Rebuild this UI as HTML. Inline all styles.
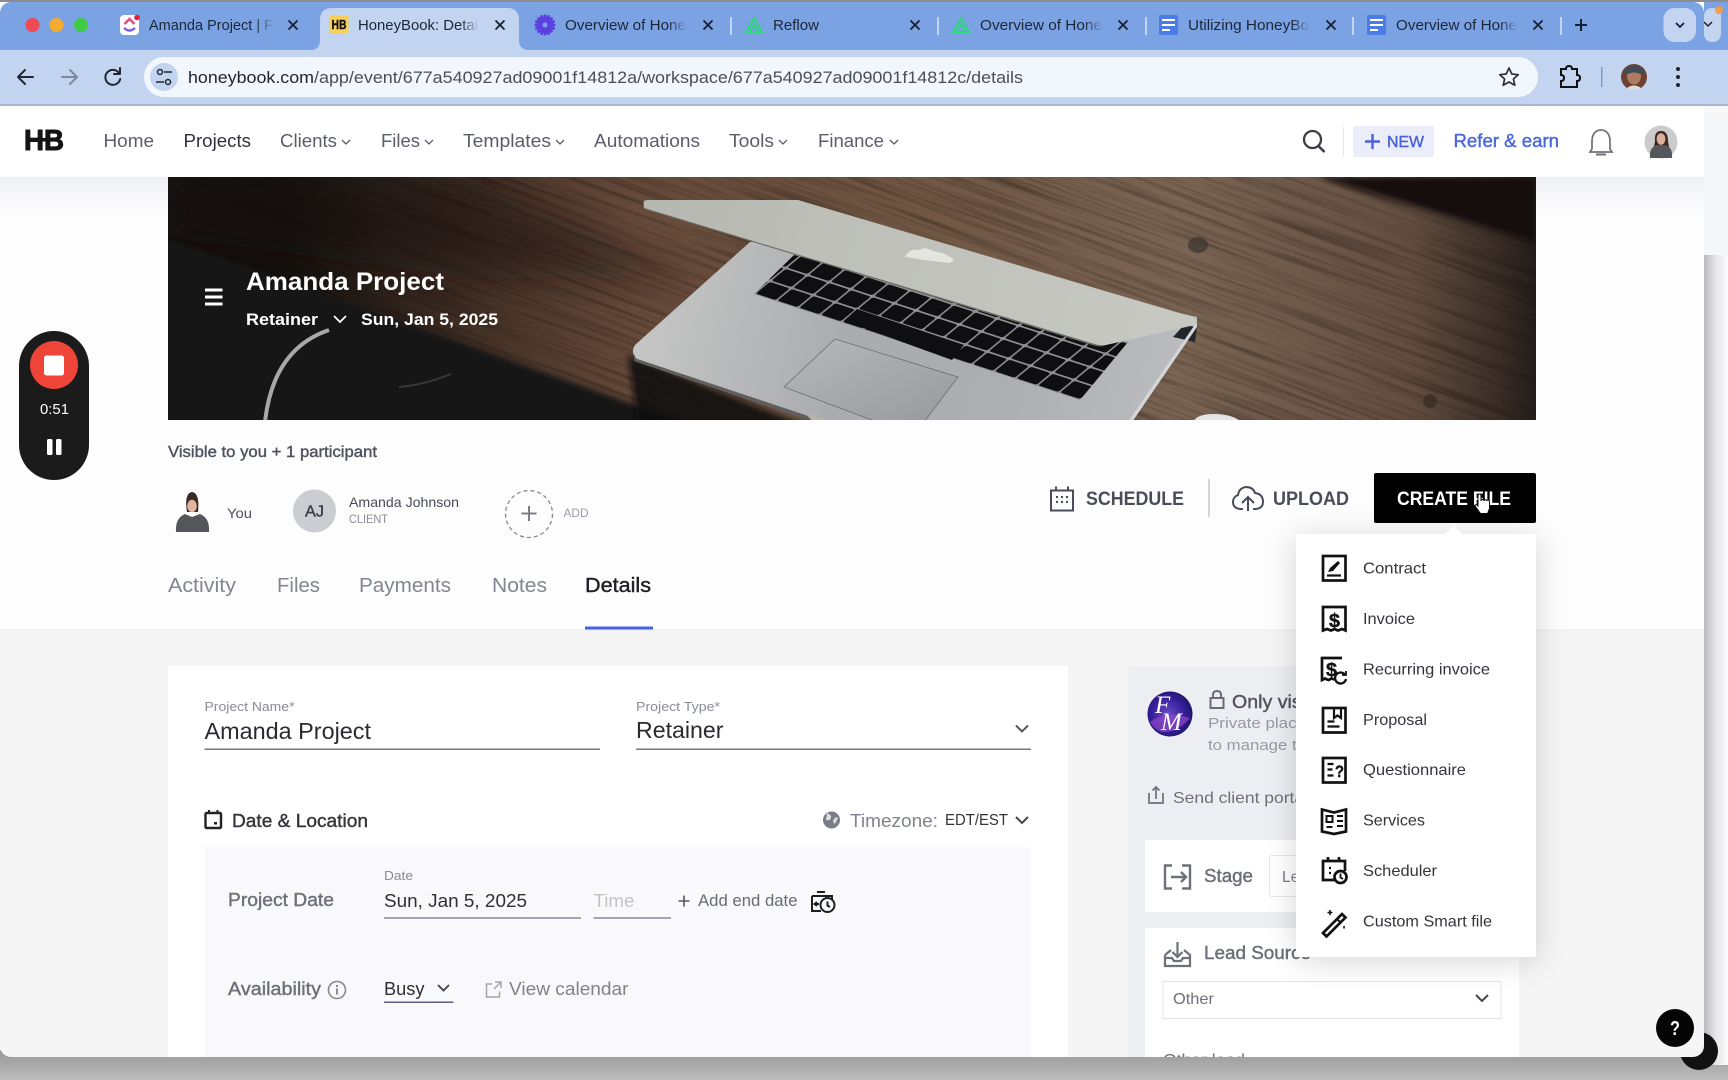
<!DOCTYPE html>
<html lang="en"><head><meta charset="utf-8"><title>HoneyBook: Details</title>
<style>
html,body{margin:0;padding:0;background:#fff;width:1728px;height:1080px;overflow:hidden}
svg{display:block}
text{font-family:"Liberation Sans",Arial,sans-serif}
.b{font-weight:700}
.m{stroke-width:.4px}
</style></head><body>
<svg xmlns="http://www.w3.org/2000/svg" width="1728" height="1080" viewBox="0 0 1728 1080">
<defs>
<clipPath id="win"><rect x="0" y="2" width="1704" height="1055" rx="11"/></clipPath>
<clipPath id="hero"><rect x="0" y="0" width="1368" height="243"/></clipPath>
<linearGradient id="bot" x1="0" y1="0" x2="0" y2="1"><stop offset="0" stop-color="#979797"/><stop offset="1" stop-color="#bdbdbd"/></linearGradient>
<linearGradient id="rs" x1="0" y1="0" x2="1" y2="0"><stop offset="0" stop-color="#b9babd"/><stop offset=".5" stop-color="#e6e6e8"/><stop offset="1" stop-color="#fdfdfd"/></linearGradient>
<linearGradient id="wd" gradientUnits="userSpaceOnUse" x1="120" y1="0" x2="1368" y2="0">
<stop offset="0" stop-color="#15110f"/><stop offset=".12" stop-color="#3a2a21"/><stop offset=".28" stop-color="#664a3a"/><stop offset=".5" stop-color="#705643"/><stop offset=".72" stop-color="#7a6453"/><stop offset=".9" stop-color="#624e40"/><stop offset=".97" stop-color="#3a2e27"/><stop offset="1" stop-color="#241d19"/></linearGradient>
<linearGradient id="lid" gradientUnits="userSpaceOnUse" x1="475" y1="25" x2="1029" y2="150"><stop offset="0" stop-color="#b6b7b1"/><stop offset=".35" stop-color="#bebfb9"/><stop offset="1" stop-color="#c8c9c3"/></linearGradient>
<linearGradient id="base" gradientUnits="userSpaceOnUse" x1="470" y1="120" x2="1000" y2="240"><stop offset="0" stop-color="#c6c7c5"/><stop offset=".4" stop-color="#aaabaf"/><stop offset=".7" stop-color="#adaeb2"/><stop offset="1" stop-color="#bbbcc0"/></linearGradient>
<linearGradient id="pad" x1="0" y1="0" x2="1" y2="1"><stop offset="0" stop-color="#b7b8bb"/><stop offset="1" stop-color="#98999d"/></linearGradient>
<filter id="wood" x="0" y="0" width="100%" height="100%" color-interpolation-filters="sRGB"><feTurbulence type="fractalNoise" baseFrequency="0.006 0.22" numOctaves="4" seed="7"/><feColorMatrix values="0 0 0 0 .08  0 0 0 0 .05  0 0 0 0 .03  2.2 0 0 0 -0.95"/></filter>
<filter id="bl" x="-20%" y="-20%" width="140%" height="140%"><feGaussianBlur stdDeviation="3"/></filter>
<filter id="bl2" x="-30%" y="-30%" width="160%" height="160%"><feGaussianBlur stdDeviation="16"/></filter>
<pattern id="grain" patternUnits="userSpaceOnUse" width="1800" height="800" patternTransform="translate(-100 -600) rotate(20)"><rect width="1800" height="800" fill="#000" filter="url(#wood)"/></pattern>
<pattern id="keys" patternUnits="userSpaceOnUse" width="20" height="20" patternTransform="matrix(1.087 .353 -.79 .65 586 117)"><rect width="20" height="20" fill="#8f9094"/><rect x=".8" y="1" width="18.400" height="18" rx="2" fill="#0f0f11"/></pattern>
<radialGradient id="fm" cx=".45" cy=".5" r=".6"><stop offset="0" stop-color="#6a4ac8"/><stop offset=".6" stop-color="#35209a"/><stop offset="1" stop-color="#1b1260"/></radialGradient>
<linearGradient id="f1" x1="0" y1="0" x2="1" y2="0"><stop offset="0" stop-color="#7ba2e3" stop-opacity="0"/><stop offset="1" stop-color="#7ba2e3"/></linearGradient>
<linearGradient id="f2" x1="0" y1="0" x2="1" y2="0"><stop offset="0" stop-color="#c3d4f1" stop-opacity="0"/><stop offset="1" stop-color="#c3d4f1"/></linearGradient>
<linearGradient id="hs" x1="0" y1="0" x2="0" y2="1"><stop offset="0" stop-color="#eff0f4"/><stop offset="1" stop-color="#fdfdfe"/></linearGradient>
</defs>

<!-- backdrop -->
<rect width="1728" height="1080" fill="#fdfdfd"/>
<rect x="0" y="1050" width="1728" height="30" fill="url(#bot)"/>
<rect x="1704" y="255" width="24" height="810" fill="url(#rs)"/>
<rect x="1704" y="106" width="24" height="149" fill="#f6f7f9"/>
<rect x="1704" y="104" width="24" height="2" fill="#a8b6d0"/>
<rect x="1704" y="50" width="24" height="54" fill="#c3d4f1"/>
<rect x="1704" y="2" width="24" height="48" fill="#7ba2e3"/>
<rect x="1704" y="8" width="17" height="34" rx="8" fill="#c3d4f1"/>
<path d="M1704 22l4 4 4-4" fill="none" stroke="#222" stroke-width="1.5"/>
<circle cx="1719" cy="10" r="4" fill="#ef9d4d"/>
<circle cx="1699" cy="1051" r="19" fill="#111"/>
<rect x="0" y="0" width="1728" height="2" fill="#8c8c8c"/>

<g clip-path="url(#win)">
<rect x="0" y="2" width="1704" height="48" fill="#7ba2e3"/>
<rect x="0" y="50" width="1704" height="54" rx="0" fill="#c3d4f1"/>
<rect x="0" y="104" width="1704" height="2" fill="#a8b6d0"/>
<rect x="0" y="106" width="1704" height="524" fill="#fdfdfe"/>
<rect x="0" y="630" width="1704" height="430" fill="#f5f5f5"/>

<!-- traffic lights -->
<circle cx="32.5" cy="25" r="7" fill="#ee4a54"/><circle cx="56.5" cy="25" r="7" fill="#f5ab2e"/><circle cx="81" cy="25" r="7" fill="#3fcb45"/>

<!-- active tab -->
<path d="M310 50q10 0 10-10V20q0-12 12-12h175q12 0 12 12v20q0 10 10 10z" fill="#c3d4f1"/>

<!-- separators -->
<g fill="#c3d4f1"><rect x="730" y="17" width="2" height="18"/><rect x="937" y="17" width="2" height="18"/><rect x="1145" y="17" width="2" height="18"/><rect x="1352" y="17" width="2" height="18"/><rect x="1560" y="17" width="2" height="18"/></g>

<!-- tab icons -->
<rect x="120" y="15" width="19" height="20" rx="4" fill="#fff"/>
<path d="M124.500 24l5-5 5 5" fill="none" stroke="#e8487f" stroke-width="2.400"/>
<path d="M124 28q5.500 5 11 0" fill="none" stroke="#7a5cf0" stroke-width="2.400"/>
<circle cx="137" cy="17.500" r="2.800" fill="#e5213a"/>
<rect x="329.500" y="15" width="19" height="19" rx="2" fill="#f7cf5a"/>
<text x="331.500" y="29" font-size="13" class="b" fill="#111" stroke="#111" stroke-width=".4" textLength="15" lengthAdjust="spacingAndGlyphs">HB</text>
<g stroke="#5b3fe0" stroke-width="3" stroke-linecap="round"><path d="M545 16v18M536 25h18M538.600 18.600l12.800 12.800M538.600 31.400l12.800-12.800M541.500 16.500l7 17M548.500 16.500l-7 17M536.500 21.500l17 7M536.500 28.500l17-7"/></g>
<circle cx="545" cy="25" r="2.500" fill="#7ba2e3"/>
<g fill="none" stroke="#1fe06a" stroke-width="1.700"><path d="M754 18l-8 14h16z"/><path d="M754 24l-4.500 8M754 24l4.500 8"/><path d="M961 18l-8 14h16z"/><path d="M961 24l-4.500 8M961 24l4.500 8"/></g>
<rect x="1159" y="15" width="19" height="20" rx="2" fill="#4a7be6"/><g fill="#fff"><rect x="1162" y="19" width="13" height="2"/><rect x="1162" y="24" width="13" height="2"/><rect x="1162" y="29" width="8" height="2"/></g>
<rect x="1367" y="15" width="19" height="20" rx="2" fill="#4a7be6"/><g fill="#fff"><rect x="1370" y="19" width="13" height="2"/><rect x="1370" y="24" width="13" height="2"/><rect x="1370" y="29" width="8" height="2"/></g>

<!-- tab titles -->
<g fill="#1d2738" font-size="14.500">
<text x="149" y="30" textLength="124" lengthAdjust="spacingAndGlyphs">Amanda Project | F</text>
<text x="358" y="30" textLength="120" lengthAdjust="spacingAndGlyphs">HoneyBook: Detai</text>
<text x="565" y="30" textLength="121" lengthAdjust="spacingAndGlyphs">Overview of Hone</text>
<text x="773" y="30" textLength="46" lengthAdjust="spacingAndGlyphs">Reflow</text>
<text x="980" y="30" textLength="122" lengthAdjust="spacingAndGlyphs">Overview of Hone</text>
<text x="1188" y="30" textLength="121" lengthAdjust="spacingAndGlyphs">Utilizing HoneyBo</text>
<text x="1396" y="30" textLength="121" lengthAdjust="spacingAndGlyphs">Overview of Hone</text>
</g>
<rect x="255" y="14" width="19" height="22" fill="url(#f1)"/>
<rect x="460" y="14" width="19" height="22" fill="url(#f2)"/>
<rect x="668" y="14" width="19" height="22" fill="url(#f1)"/>
<rect x="1084" y="14" width="19" height="22" fill="url(#f1)"/>
<rect x="1291" y="14" width="19" height="22" fill="url(#f1)"/>
<rect x="1499" y="14" width="19" height="22" fill="url(#f1)"/>
<!-- tab close -->
<g fill="none" stroke="#16202e" stroke-width="1.800"><path d="M288.500 20.500l9 9m0-9l-9 9"/><path d="M495.500 20.500l9 9m0-9l-9 9"/><path d="M703.500 20.500l9 9m0-9l-9 9"/><path d="M910.500 20.500l9 9m0-9l-9 9"/><path d="M1118.500 20.500l9 9m0-9l-9 9"/><path d="M1326.500 20.500l9 9m0-9l-9 9"/><path d="M1533.500 20.500l9 9m0-9l-9 9"/><path d="M1581 19v12m-6-6h12" stroke-width="2"/></g>
<rect x="1663.500" y="8" width="32.500" height="34" rx="11" fill="#c3d4f1"/>
<path d="M1676 23l4 4 4-4" fill="none" stroke="#16202e" stroke-width="1.800"/>

<!-- toolbar -->
<g fill="none" stroke-linecap="round" stroke-linejoin="round">
<path d="M33 77H19m6-7l-7 7 7 7" stroke="#1f2733" stroke-width="2"/>
<path d="M62 77h14m-6-7l7 7-7 7" stroke="#7e8a9c" stroke-width="2"/>
<path d="M119 73a7.500 7.500 0 1 0 1.200 6M120 68v6h-6" stroke="#1f2733" stroke-width="2"/>
</g>
<rect x="144" y="57" width="1394" height="40" rx="20" fill="#f2f6fd"/>
<circle cx="164" cy="77" r="14" fill="#c3d4f1"/>
<g fill="none" stroke="#1f2733" stroke-width="1.500"><circle cx="160" cy="72" r="2.500"/><path d="M164 72h8M156 82h8"/><circle cx="168" cy="82" r="2.500"/></g>
<text x="188" y="83" font-size="16.500" fill="#1d2430" textLength="126" lengthAdjust="spacingAndGlyphs">honeybook.com</text>
<text x="314" y="83" font-size="16.500" fill="#4a5059" textLength="709" lengthAdjust="spacingAndGlyphs">/app/event/677a540927ad09001f14812a/workspace/677a540927ad09001f14812c/details</text>
<path d="M1509 68l2.800 6 6.400.700-4.800 4.300 1.400 6.300-5.800-3.300-5.800 3.300 1.400-6.300-4.800-4.300 6.400-.700z" fill="none" stroke="#2a303a" stroke-width="1.700" stroke-linejoin="round"/>
<path d="M1561 69h5q0-3 3-3t3 3h5v6q3 0 3 3t-3 3v6h-16v-6q3 0 3-3t-3-3z" fill="none" stroke="#111" stroke-width="2"/>
<rect x="1601" y="67" width="1.500" height="20" fill="#7d9ad0"/>
<circle cx="1634" cy="77" r="13" fill="#6e4030"/><ellipse cx="1634" cy="76" rx="7" ry="8.500" fill="#b07a60"/><path d="M1623 72q11-13 22 0l-3 3q-8-5-16 0z" fill="#3f4c58"/><path d="M1627 88q7-5 14 0l-3 2h-8z" fill="#ddd"/>
<g fill="#1d2430"><circle cx="1678" cy="69" r="2"/><circle cx="1678" cy="77" r="2"/><circle cx="1678" cy="85" r="2"/></g>

<!-- app header -->
<rect x="0" y="106" width="1704" height="71" fill="#fff"/>
<rect x="0" y="177" width="168" height="36" fill="url(#hs)"/>
<rect x="1536" y="177" width="168" height="36" fill="url(#hs)"/>
<text x="24" y="150" font-size="29" class="b" fill="#151515" stroke="#151515" stroke-width="1" textLength="40" lengthAdjust="spacingAndGlyphs">HB</text>
<rect x="36" y="138" width="10" height="3.500" fill="#151515"/>
<g font-size="18" fill="#5b5e68">
<text x="103.500" y="147" textLength="50.500" lengthAdjust="spacingAndGlyphs">Home</text>
<text x="183.500" y="147" fill="#30323a" textLength="67.500" lengthAdjust="spacingAndGlyphs">Projects</text>
<text x="280" y="147" textLength="57" lengthAdjust="spacingAndGlyphs">Clients</text>
<text x="381" y="147" textLength="39" lengthAdjust="spacingAndGlyphs">Files</text>
<text x="463" y="147" textLength="88" lengthAdjust="spacingAndGlyphs">Templates</text>
<text x="594" y="147" textLength="106" lengthAdjust="spacingAndGlyphs">Automations</text>
<text x="729" y="147" textLength="45" lengthAdjust="spacingAndGlyphs">Tools</text>
<text x="818" y="147" textLength="66" lengthAdjust="spacingAndGlyphs">Finance</text>
</g>
<g fill="none" stroke="#5b5e68" stroke-width="1.300"><path d="M342 140l4 4 4-4M425 140l4 4 4-4M556 140l4 4 4-4M779 140l4 4 4-4M890 140l4 4 4-4"/></g>
<circle cx="1312.500" cy="139.500" r="8.500" fill="none" stroke="#3c3e46" stroke-width="2.300"/><path d="M1318.500 146l6 6" stroke="#3c3e46" stroke-width="2.600"/>
<rect x="1343" y="127" width="1" height="29" fill="#e6e7ec"/>
<rect x="1353" y="126" width="81" height="31" rx="2" fill="#ecedfb"/>
<path d="M1372.500 134v15m-7.500-7.500h15" stroke="#4a62d8" stroke-width="2.400"/>
<text x="1387" y="147" font-size="16" class="m" stroke="#4a62d8" fill="#4a62d8" textLength="37" lengthAdjust="spacingAndGlyphs">NEW</text>
<text x="1453.500" y="147" font-size="18" class="m" stroke="#4a66dc" fill="#4a66dc" textLength="105.500" lengthAdjust="spacingAndGlyphs">Refer &amp; earn</text>
<path d="M1601 130c-6 0-9 5-9 11v8l-2 3h22l-2-3v-8c0-6-3-11-9-11z" fill="none" stroke="#6f7179" stroke-width="1.700"/><rect x="1596" y="153.500" width="10" height="2" fill="#6f7179"/>
<circle cx="1661" cy="142" r="16.500" fill="#cbcbcb"/>
<path d="M1655 141q-1-10 6-10t7 10l1 6h-15z" fill="#3b2a22"/><ellipse cx="1661" cy="139" rx="4.400" ry="5.800" fill="#dcb09a"/><path d="M1650 158q-1-11 7-13h8q8 2 7 13z" fill="#55565c"/>

<!-- hero -->
<g transform="translate(168 177)">
<g clip-path="url(#hero)">
<rect width="1368" height="243" fill="url(#wd)"/>
<rect width="1368" height="243" fill="url(#grain)" opacity=".38"/>
<path d="M0 0H300L520 100 300 100 0 60z" fill="#120e0c" opacity=".45" filter="url(#bl2)"/>
<path d="M1152 0h216v66z" fill="#131110" filter="url(#bl)"/>
<path d="M-10 58L530 250H-10z" fill="#141313" filter="url(#bl)"/>
<path d="M97 245Q105 172 161 153" fill="none" stroke="#a8a8a8" stroke-width="4"/>
<path d="M231 210q25-2 52-13" fill="none" stroke="#383838" stroke-width="2"/>
<ellipse cx="1030" cy="68" rx="10" ry="8" fill="#3b342f" opacity=".7"/>
<ellipse cx="1262" cy="224" rx="7" ry="7" fill="#332720" opacity=".6"/>
<path d="M1025 245q4-8 20-8 20 0 28 8z" fill="#e4e4e2"/>
<!-- laptop -->
<path d="M460 178L640 250H470z" fill="#0c0c0c" filter="url(#bl)" opacity=".85"/>
<path d="M582 65L467 168q-5 8 2 14L637 238l20 7H964L1029 150 1029 140 700 65z" fill="url(#base)"/>
<path d="M466 176q1 5 3 6L637 238l28 9-2 4L466 184z" fill="#5f5f60"/>
<path d="M637 236l28 9h-20z" fill="#b4b4a8"/>
<path d="M626 78L586 117 912 223 960 165z" fill="url(#keys)"/>
<path d="M676 144L689 132 796 168 784 183z" fill="#0f0f11"/>
<path d="M667 162L790 200 756 245H709L616 210z" fill="url(#pad)" stroke="#6d6e72" stroke-width=".8"/>
<path d="M1029 150L1016 148 1005 160 1027 165z" fill="#23272c"/>
<path d="M964 245L1029 150l-1-4-68 99z" fill="#d5d6d8"/>
<path d="M475.500 26q0-3 4-3H630L1025 140q6 3 2 8L938 168q-6 1-12-1L476 31z" fill="url(#lid)"/>
<path d="M476 31L926 167q6 2 12 1l-2 1q-6 1-12-1L476 32z" fill="#6e6e68"/>
<path d="M737 80q4-9 14-7 6-4 14 1 14 2 21 9l-4 3q-20-2-45-6z" fill="#e4e4e0"/>
</g>
<!-- hero overlays -->
<g fill="#fff">
<rect x="37" y="111.500" width="17.500" height="3"/><rect x="37" y="118.500" width="17.500" height="3"/><rect x="37" y="125.500" width="17.500" height="3"/>
<text x="78" y="113" font-size="25" class="b" textLength="198" lengthAdjust="spacingAndGlyphs">Amanda Project</text>
<text x="78" y="148" font-size="16.500" class="b" textLength="72" lengthAdjust="spacingAndGlyphs">Retainer</text>
<text x="193" y="148" font-size="16.500" class="b" textLength="137" lengthAdjust="spacingAndGlyphs">Sun, Jan 5, 2025</text>
</g>
<path d="M166 139l6 6 6-6" fill="none" stroke="#fff" stroke-width="1.800"/>
</g>

<!-- record widget -->
<rect x="19" y="331" width="70" height="149" rx="35" fill="#1b1b1c"/>
<circle cx="54" cy="365" r="24" fill="#ef4538"/>
<rect x="44" y="355.500" width="20" height="20" rx="2.500" fill="#fff"/>
<text x="40" y="414" font-size="14.500" fill="#fff" textLength="29" lengthAdjust="spacingAndGlyphs">0:51</text>
<rect x="47" y="439" width="5.500" height="16" rx="1.500" fill="#fff"/><rect x="56" y="439" width="5.500" height="16" rx="1.500" fill="#fff"/>

<!-- participants -->
<text x="168" y="457" font-size="15.500" class="m" stroke="#50535f" fill="#50535f" textLength="209" lengthAdjust="spacingAndGlyphs">Visible to you + 1 participant</text>
<path d="M187 512q-3-19 5-20 8 1 6 20z" fill="#3a2a22"/><ellipse cx="192" cy="506" rx="4.800" ry="6.200" fill="#e0b6a0"/><path d="M176 532q-1-14 9-18l7 3 8-3q10 4 9 18z" fill="#55565c"/>
<text x="227" y="518" font-size="14" fill="#50535f" textLength="25" lengthAdjust="spacingAndGlyphs">You</text>
<circle cx="314.500" cy="511" r="21.500" fill="#cbcdd3"/>
<text x="305" y="516.500" font-size="15.500" class="m" stroke="#3d3f48" fill="#3d3f48" textLength="19" lengthAdjust="spacingAndGlyphs">AJ</text>
<text x="349" y="507" font-size="14" fill="#4a4c57" textLength="110" lengthAdjust="spacingAndGlyphs">Amanda Johnson</text>
<text x="349" y="523" font-size="11.500" fill="#8a8c96" textLength="39" lengthAdjust="spacingAndGlyphs">CLIENT</text>
<circle cx="529" cy="514" r="23.500" fill="none" stroke="#878994" stroke-width="1.300" stroke-dasharray="4 3"/>
<path d="M529 506v15m-7.500-7.500h15" stroke="#7b7d88" stroke-width="2"/>
<text x="563.500" y="517" font-size="11.500" fill="#9a9ca5" textLength="25" lengthAdjust="spacingAndGlyphs">ADD</text>

<!-- tabs -->
<g font-size="20.500" fill="#83858f">
<text x="168" y="592" textLength="68" lengthAdjust="spacingAndGlyphs">Activity</text>
<text x="277" y="592" textLength="43" lengthAdjust="spacingAndGlyphs">Files</text>
<text x="359" y="592" textLength="92" lengthAdjust="spacingAndGlyphs">Payments</text>
<text x="492" y="592" textLength="55" lengthAdjust="spacingAndGlyphs">Notes</text>
<text x="585" y="592" class="m" stroke="#1e1f24" fill="#1e1f24" textLength="66" lengthAdjust="spacingAndGlyphs">Details</text>
</g>
<rect x="585" y="626.500" width="68" height="3.500" fill="#4a62e0"/>
<rect x="0" y="629.500" width="1704" height="1" fill="#ececef"/>

<!-- actions -->
<g fill="none" stroke="#4a4c57" stroke-width="2"><rect x="1051" y="490.500" width="22" height="20"/><path d="M1056 486.500v4M1068 486.500v4"/></g>
<g fill="#4a4c57"><rect x="1056" y="496" width="2" height="2"/><rect x="1061" y="496" width="2" height="2"/><rect x="1066" y="496" width="2" height="2"/><rect x="1056" y="501" width="2" height="2"/><rect x="1061" y="501" width="2" height="2"/><rect x="1066" y="501" width="2" height="2"/></g>
<text x="1086" y="505" font-size="19" class="b" fill="#4a4c57" textLength="98" lengthAdjust="spacingAndGlyphs">SCHEDULE</text>
<rect x="1208" y="479" width="2" height="38" fill="#d3d4d8"/>
<path d="M1243 509h-3q-7-1-7-7 0-5 5-7 1-7 8-8 7 0 9 6 8 1 8 9 0 6-7 7h-3" fill="none" stroke="#4a4c57" stroke-width="2"/><path d="M1248 511v-14m-6 6l6-6 6 6" fill="none" stroke="#4a4c57" stroke-width="2"/>
<text x="1273" y="505" font-size="19" class="b" fill="#4a4c57" textLength="76" lengthAdjust="spacingAndGlyphs">UPLOAD</text>
<rect x="1374" y="473" width="162" height="50" rx="2" fill="#000"/>
<text x="1397" y="505" font-size="19" class="b" fill="#fff" textLength="114" lengthAdjust="spacingAndGlyphs">CREATE FILE</text>
<path d="M1478 496q0-2 1.500-2t1.500 2v5q0-1.500 1.500-1.500t1.500 1.500q0-1.200 1.300-1.200t1.500 1.200q0-1 1.200-1t1.500 1.500v7l-2 5h-7l-5-7q-1-2 1-2l1.500 1.500z" fill="#fff" stroke="#111" stroke-width="1"/>

<!-- main card -->
<rect x="168" y="666" width="900" height="400" fill="#fff"/>
<g font-size="13" fill="#8a8c96">
<text x="204.500" y="711" textLength="90" lengthAdjust="spacingAndGlyphs">Project Name*</text>
<text x="636" y="711" textLength="84" lengthAdjust="spacingAndGlyphs">Project Type*</text>
</g>
<text x="204.500" y="739" font-size="23" fill="#2a2b31" textLength="166.500" lengthAdjust="spacingAndGlyphs">Amanda Project</text>
<text x="636" y="738" font-size="23" fill="#2a2b31" textLength="87.500" lengthAdjust="spacingAndGlyphs">Retainer</text>
<rect x="204.500" y="748.500" width="395.500" height="1.500" fill="#77797f"/>
<rect x="636" y="748.500" width="395" height="1.500" fill="#77797f"/>
<path d="M1016 725.500l6 6 6-6" fill="none" stroke="#55575f" stroke-width="2"/>

<rect x="205.500" y="813" width="15.500" height="15" rx="1" fill="none" stroke="#222" stroke-width="2.400"/><path d="M209 810v4M217.500 810v4" stroke="#222" stroke-width="2"/><rect x="214" y="822" width="3" height="2.500" fill="#222"/>
<text x="232" y="827" font-size="18" class="m" stroke="#34353c" fill="#34353c" textLength="136" lengthAdjust="spacingAndGlyphs">Date &amp; Location</text>
<circle cx="831.500" cy="820" r="8.500" fill="#7a7d88"/><path d="M827 813q5 2 4 5t-5 2M835 824q-3-2-1-5t4-1" fill="#fff" opacity=".75"/>
<text x="850" y="827" font-size="18" fill="#80828c" textLength="88" lengthAdjust="spacingAndGlyphs">Timezone:</text>
<text x="945" y="825" font-size="16" fill="#34353c" textLength="63" lengthAdjust="spacingAndGlyphs">EDT/EST</text>
<path d="M1016 817l6 6 6-6" fill="none" stroke="#44464e" stroke-width="2"/>

<rect x="204.500" y="847" width="826.500" height="215" fill="#f9f9fb"/>
<text x="384" y="880" font-size="13" fill="#8a8c96" textLength="29" lengthAdjust="spacingAndGlyphs">Date</text>
<text x="228" y="906" font-size="18" class="m" stroke="#6e7079" fill="#6e7079" textLength="106" lengthAdjust="spacingAndGlyphs">Project Date</text>
<text x="384" y="907" font-size="18" fill="#2f3036" textLength="143" lengthAdjust="spacingAndGlyphs">Sun, Jan 5, 2025</text>
<rect x="384" y="917" width="197" height="2" fill="#a3a5b0"/>
<text x="593.500" y="907" font-size="18" fill="#c3c4ca" textLength="41" lengthAdjust="spacingAndGlyphs">Time</text>
<rect x="593.500" y="917" width="77.500" height="2" fill="#a3a5b0"/>
<path d="M684 895.500v11m-5.500-5.500h11" stroke="#55575f" stroke-width="1.600"/>
<text x="698" y="906" font-size="16.500" fill="#696b74" textLength="99.500" lengthAdjust="spacingAndGlyphs">Add end date</text>
<g fill="none" stroke="#1d1e22" stroke-width="2"><path d="M817 892h8M812 896h20v6M812 896v15h9"/><circle cx="827.500" cy="905" r="7" fill="#f9f9fb"/><path d="M827.500 901.500v4l2.500 1.500"/><path d="M814 904h5m-2-2l-2.500 2 2.500 2"/></g>

<text x="228" y="995" font-size="18" class="m" stroke="#6e7079" fill="#6e7079" textLength="93" lengthAdjust="spacingAndGlyphs">Availability</text>
<circle cx="337" cy="990" r="8.500" fill="none" stroke="#888a94" stroke-width="1.600"/><rect x="336" y="988.500" width="2" height="6" fill="#888a94"/><rect x="336" y="985" width="2" height="2" fill="#888a94"/>
<text x="384" y="995" font-size="18" fill="#2f3036" textLength="40.500" lengthAdjust="spacingAndGlyphs">Busy</text>
<path d="M438 985l5.500 5.500 5.500-5.500" fill="none" stroke="#44464e" stroke-width="1.900"/>
<rect x="384" y="1001.500" width="69.500" height="1.500" fill="#5a5c80"/>
<path d="M492 984h-5.500v13h13v-5.500M495 982h6v6M501 982l-7 7" fill="none" stroke="#a3a5ae" stroke-width="1.500"/>
<text x="509" y="995" font-size="18" fill="#80828c" textLength="119.500" lengthAdjust="spacingAndGlyphs">View calendar</text>

<!-- right panel -->
<rect x="1128.500" y="666" width="390.500" height="400" fill="#edeef2"/>
<circle cx="1170" cy="714" r="22.500" fill="url(#fm)"/>
<path d="M1150 722q15-12 40-4-12 14-26 14-8 0-14-10z" fill="#9c4fd0" opacity=".6"/>
<text x="1155" y="713" font-size="25" fill="#fff" font-style="italic" style="font-family:'Liberation Serif',serif">F</text>
<text x="1161" y="730" font-size="25" fill="#fff" font-style="italic" style="font-family:'Liberation Serif',serif">M</text>
<rect x="1210.500" y="698" width="13" height="10" fill="none" stroke="#6a6c76" stroke-width="2"/><path d="M1213 698v-3q0-4 4-4t4 4v3" fill="none" stroke="#6a6c76" stroke-width="2"/>
<text x="1232" y="708" font-size="18" class="m" stroke="#52545e" fill="#52545e" textLength="74" lengthAdjust="spacingAndGlyphs">Only visi</text>
<text x="1208" y="728" font-size="15" fill="#989aa4" textLength="98" lengthAdjust="spacingAndGlyphs">Private place</text>
<text x="1208" y="750" font-size="15" fill="#989aa4" textLength="98" lengthAdjust="spacingAndGlyphs">to manage th</text>
<path d="M1149 793v10h14v-10M1156 799v-12m-3.500 3.500l3.500-3.500 3.500 3.500" fill="none" stroke="#6e7079" stroke-width="1.700"/>
<text x="1173" y="803" font-size="16" fill="#6e7079" textLength="135" lengthAdjust="spacingAndGlyphs">Send client portal</text>
<rect x="1145" y="840" width="374" height="72" fill="#fff"/>
<path d="M1172 865.500h-7v23h7M1182 865.500h8v23h-8M1171 877h15m-5-5l5 5-5 5" fill="none" stroke="#6e7079" stroke-width="2.400"/>
<text x="1204" y="882" font-size="18.500" class="m" stroke="#6b6d77" fill="#6b6d77" textLength="49" lengthAdjust="spacingAndGlyphs">Stage</text>
<rect x="1269.500" y="855.500" width="120" height="41" rx="2" fill="#fff" stroke="#e5e6ea"/>
<text x="1282" y="882" font-size="16" fill="#7a7c86" textLength="35" lengthAdjust="spacingAndGlyphs">Lead</text>
<rect x="1145" y="928" width="374" height="140" fill="#fff"/>
<path d="M1165 955v11h25v-11l-6-5M1171 950l-6 5M1165 958h7l2 3h7l2-3h7" fill="none" stroke="#6e7079" stroke-width="2.200"/><path d="M1177.500 942v15m-5-5l5 5 5-5" fill="none" stroke="#6e7079" stroke-width="2.200"/>
<text x="1204" y="959" font-size="18.500" class="m" stroke="#6b6d77" fill="#6b6d77" textLength="107" lengthAdjust="spacingAndGlyphs">Lead Source</text>
<rect x="1163" y="981.500" width="338" height="37" fill="#fff" stroke="#e5e6ea"/>
<text x="1173" y="1004" font-size="16" fill="#6e7079" textLength="41" lengthAdjust="spacingAndGlyphs">Other</text>
<path d="M1476 995l6 6 6-6" fill="none" stroke="#44464e" stroke-width="2"/>
<text x="1163" y="1065" font-size="16" fill="#6e7079" textLength="82" lengthAdjust="spacingAndGlyphs">Other lead</text>

<!-- dropdown -->
<rect x="1296" y="534" width="240" height="423" rx="2" fill="#000" opacity=".16" filter="url(#bl2)" transform="translate(0 4)"/>
<rect x="1296" y="534" width="240" height="423" rx="2" fill="#fff"/>
<path d="M1445 534l8.500-9 8.500 9z" fill="#fff"/>
<g font-size="16" fill="#34353c">
<text x="1363" y="573.500" textLength="63" lengthAdjust="spacingAndGlyphs">Contract</text>
<text x="1363" y="624" textLength="52" lengthAdjust="spacingAndGlyphs">Invoice</text>
<text x="1363" y="674.500" textLength="127" lengthAdjust="spacingAndGlyphs">Recurring invoice</text>
<text x="1363" y="725" textLength="64" lengthAdjust="spacingAndGlyphs">Proposal</text>
<text x="1363" y="775" textLength="103" lengthAdjust="spacingAndGlyphs">Questionnaire</text>
<text x="1363" y="825.500" textLength="62" lengthAdjust="spacingAndGlyphs">Services</text>
<text x="1363" y="876" textLength="74" lengthAdjust="spacingAndGlyphs">Scheduler</text>
<text x="1363" y="926.500" textLength="129" lengthAdjust="spacingAndGlyphs">Custom Smart file</text>
</g>
<g fill="none" stroke="#111" stroke-width="2.700">
<!-- contract -->
<rect x="1323" y="556" width="22.500" height="24.500"/>
<path d="M1328 572l2-4 8-7 2 2-7 8z" fill="#111" stroke="none"/><path d="M1327 575.500h14" stroke-width="2.200"/>
<!-- invoice -->
<path d="M1323 607h22.500v23.500l-3.500-1.500-4 1.500-3.500-1.500-3.500 1.500-4-1.500-4 1.500z"/>
<!-- recurring -->
<path d="M1342 658h-20v22l3-1.500 3.500 1.500 3-1.500 3 1"/>
<path d="M1346 679a5.500 5.500 0 1 1-1.200-4.500" stroke-width="2.300"/><path d="M1346 671v4h-4" stroke-width="1.800"/>
<!-- proposal -->
<rect x="1323" y="708" width="22.500" height="24.500"/><path d="M1334 708v10l3.500-2.500 3.500 2.500v-10" stroke-width="2.200"/><path d="M1327.500 721.500h7M1327.500 726.500h12" stroke-width="2.200"/>
<!-- questionnaire -->
<rect x="1323" y="758" width="22.500" height="24.500"/><path d="M1327.500 764h6M1327.500 769.500h5M1327.500 775.500h6" stroke-width="2.200"/>
<!-- services -->
<path d="M1322 809.500l12 3 12-3v22l-12 2.500-12-2.500z"/><rect x="1326.500" y="816" width="6" height="6" stroke-width="2"/><path d="M1337 816h6M1337 821h6M1337 826h6M1326.500 827h6" stroke-width="2"/>
<!-- scheduler -->
<path d="M1339 880h-16v-19h22v10M1328 857v5M1339 857v5"/><path d="M1329 868h2M1329 873h2" stroke-width="2.200"/><circle cx="1340.500" cy="877" r="6" fill="#fff"/><path d="M1340.500 873.500v4l2.500 1.500" stroke-width="1.800"/>
<!-- wand -->
<path d="M1323 933l3.500 3.500 19-19-3.500-3.500z"/><path d="M1337 919l3.500 3.500" stroke-width="2"/><path d="M1330 910v5M1327.500 912.500h5M1344 926v2.500" stroke-width="1.600"/>
</g>
<text x="1329" y="627" font-size="19" class="b" fill="#111" stroke="#111" stroke-width=".4" textLength="11" lengthAdjust="spacingAndGlyphs">$</text>
<text x="1326" y="676" font-size="18" class="b" fill="#111" stroke="#111" stroke-width=".4" textLength="11" lengthAdjust="spacingAndGlyphs">$</text>
<text x="1335" y="777" font-size="17" class="b" fill="#111" stroke="#111" stroke-width=".4" textLength="9" lengthAdjust="spacingAndGlyphs">?</text>

<!-- help -->
<circle cx="1675" cy="1028" r="19" fill="#050505"/>
<text x="1670" y="1035" font-size="20" class="b" fill="#fff" textLength="10" lengthAdjust="spacingAndGlyphs">?</text>
</g>
</svg>
</body></html>
